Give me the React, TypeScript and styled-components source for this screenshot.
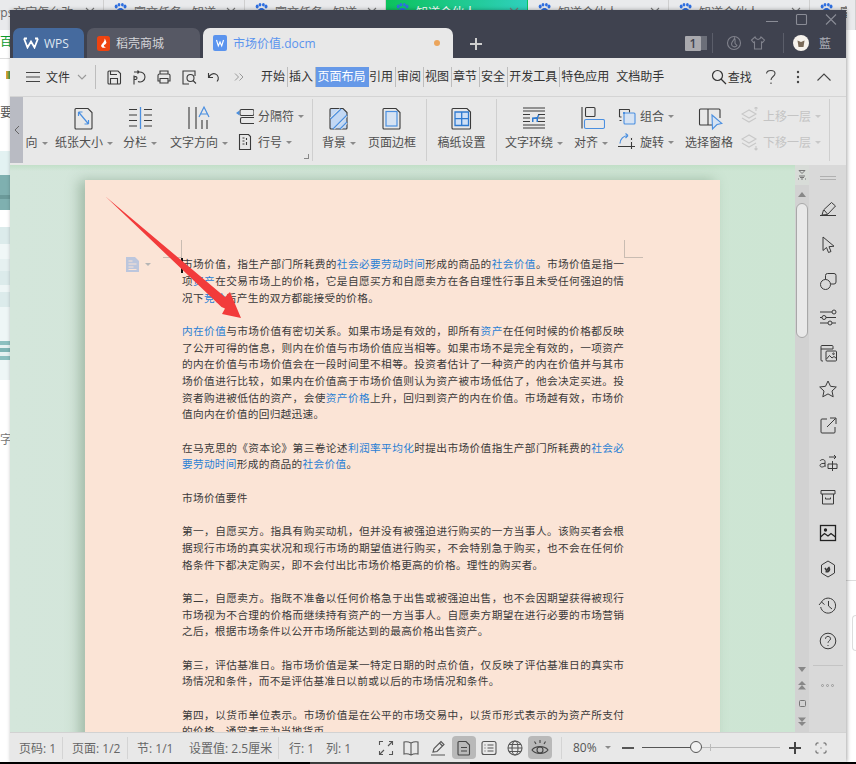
import React from 'react';
import styled, { createGlobalStyle } from 'styled-components';

const Global = createGlobalStyle`
  html, body { margin: 0; padding: 0; background: #fff; }
  body { font-family: "Open Sans", "Noto Sans CJK SC", sans-serif; }
  #root { width: 856px; height: 764px; overflow: hidden; }
`;

const Desktop = styled.div`position: relative; width: 856px; height: 764px; overflow: hidden; background: #fff;`;

/* ---- what lies behind the window ---- */
const BrowserStrip = styled.div`display: flex; height: 30px; background: #e9eaec; color: #666; font-size: 12px;`;
const BrowserTab = styled.div<{ $w: number; $green?: boolean; $first?: boolean }>`
  width: ${p => p.$w}px; flex: none; display: flex; align-items: flex-start; gap: 6px; padding: 3px 8px 0 ${p => (p.$first ? 0 : 9)}px;
  box-sizing: border-box; white-space: nowrap; overflow: hidden;
  border-right: 1px solid ${p => (p.$green ? 'transparent' : '#cfcfcf')};
  background: ${p => (p.$green ? 'linear-gradient(90deg,#0cc25c,#2fd0bd)' : 'transparent')};
  color: ${p => (p.$green ? '#fff' : '#666')};
  & > span { flex: 1; overflow: hidden; margin-left: ${p => (p.$first ? -9 : 0)}px; }
`;
const LeftStrip = styled.div`position: absolute; left: 0; top: 30px; width: 10px; display: flex; flex-direction: column; overflow: hidden;`;
const Band = styled.div<{ $h: number; $bg?: string; $fg?: string }>`
  height: ${p => p.$h}px; background: ${p => p.$bg || '#fff'}; color: ${p => p.$fg || '#555'};
  font-size: 12px; line-height: ${p => p.$h}px; white-space: nowrap;
`;
const RightStrip = styled.div`position: absolute; left: 846px; top: 30px; width: 10px; height: 734px; display: flex; flex-direction: column;`;
const RightLine = styled.div`height: 1px; margin-top: 550px; background: #ddd;`;
const RightBox = styled.div`height: 34px; margin-top: 34px; margin-left: 6px; border: 1px solid #ddd; border-right: 0; border-radius: 4px 0 0 4px;`;
const BottomStrip = styled.div`position: absolute; left: 0; top: 762px; width: 856px; height: 2px; background: linear-gradient(90deg,#000 0,#000 310px,#444 310px,#444 470px,#000 470px);`;

/* ---- window ---- */
const Window = styled.div`
  position: absolute; left: 10px; top: 10px; width: 836px; height: 752px;
  display: flex; flex-direction: column; background: #e8e8e8; box-shadow: 1px 0 4px rgba(0,0,0,.35);
`;
const TitleBar = styled.div`height: 48px; flex: none; display: flex; align-items: flex-end; background: #3f424f; padding-left: 3px; position: relative;`;
const DocTab = styled.div<{ $w: number; $bg: string; $fg: string }>`
  width: ${p => p.$w}px; height: 30px; flex: none; margin-right: 3px; box-sizing: border-box; padding-left: 10px;
  display: flex; align-items: center; gap: 5px; border-radius: 7px 7px 0 0; font-size: 12px;
  background: ${p => p.$bg}; color: ${p => p.$fg};
`;
const TabDot = styled.i`width: 6px; height: 6px; border-radius: 50%; background: #eba55c; margin-left: auto; margin-right: 13px;`;
const TitleRight = styled.div`margin-left: auto; height: 48px; width: 161px; display: flex; flex-direction: column; flex: none;`;
const WinControls = styled.div`height: 18px; display: flex; justify-content: flex-end; gap: 14px; padding-right: 7px;`;
const TitleTools = styled.div`display: flex; align-items: center; margin-top: 4px; height: 22px;`;
const Badge = styled.div`width: 16px; height: 15px; background: #a9a9ae; color: #3f424f; font-size: 12px; font-weight: 600; line-height: 15px; text-align: center; border-radius: 1px;`;
const TitleSep = styled.i<{ $ml: number }>`width: 1px; height: 20px; background: #5b5e6a; margin-left: ${p => p.$ml}px;`;
const TitleIcon = styled.div<{ $ml: number }>`margin-left: ${p => p.$ml}px;`;
const Avatar = styled.div`width: 16px; height: 16px; border-radius: 50%; background: #f6f2ec; margin-left: 9px; display: flex; align-items: center; justify-content: center;`;
const UserName = styled.span`font-size: 12px; color: #a9abb3; margin-left: 10px;`;
const AddTab = styled.div`align-self: center; margin-top: 19px; margin-left: 13px;`;

const MenuBar = styled.div`height: 38px; flex: none; display: flex; align-items: center; background: #e8e8e8; border-bottom: 1px solid #d4d4d4; padding-left: 15px; color: #333; font-size: 12px;`;
const FileText = styled.span`margin-left: 5px; width: 24px; flex: none; white-space: nowrap;`;
const FileChevron = styled.div`margin-left: 7px;`;
const MenuSep = styled.i`width: 1px; height: 24px; background: #bdbdbd; margin: 0 5px 0 8px; flex: none;`;
const QuickIcon = styled.div`width: 25px; display: flex; justify-content: center; flex: none;`;
const MenuTabs = styled.div`display: flex; align-items: center; margin-left: 8.5px;`;
const MenuTab = styled.div<{ $on?: boolean; $noLine?: boolean; $ml?: number }>`
  height: 20px; line-height: 20px; padding: 0 ${p => (p.$on ? 2 : 1.5)}px; white-space: nowrap; flex: none;
  border-right: 1px solid ${p => (p.$on || p.$noLine ? 'transparent' : '#bdbdbd')};
  background: ${p => (p.$on ? '#6699e8' : 'transparent')}; color: ${p => (p.$on ? '#fff' : '#333')};
  margin-right: ${p => (p.$on ? -1 : 0)}px; margin-left: ${p => p.$ml || 0}px; box-sizing: content-box;
`;
const MenuRight = styled.div`display: flex; align-items: center; margin-left: 44px;`;
const SearchText = styled.span`margin-left: 1px; width: 24px; font-size: 12px; white-space: nowrap;`;
const MenuGlyph = styled.div<{ $w: number }>`width: ${p => p.$w}px; display: flex; justify-content: center; flex: none;`;

const Ribbon = styled.div`height: 68px; flex: none; display: flex; background: #e8e8e8; color: #505050; font-size: 12px; overflow: hidden;`;
const RibbonGutter = styled.div`width: 13px; flex: none; height: 66px; background: #b9bbc3; display: flex; align-items: center; justify-content: center;`;
const Big = styled.div<{ $w: number }>`width: ${p => p.$w}px; flex: none; display: flex; flex-direction: column; align-items: center; padding-top: 7px; box-sizing: border-box;`;
const BigIcon = styled.div`height: 28px; width: 28px;`;
const BigLabel = styled.div`margin-top: 2px; height: 18px; line-height: 18px; white-space: nowrap; display: flex; align-items: center; gap: 4px;`;
const Caret = styled.i<{ $off?: boolean }>`display: block; width: 0; height: 0; border: 3px solid transparent; border-bottom: 0; border-top: 3px solid ${p => (p.$off ? '#c8c8c8' : '#8a8a8a')}; flex: none;`;
const SmallCol = styled.div<{ $w: number; $pl: number }>`
  width: ${p => p.$w}px; flex: none; box-sizing: border-box; padding-left: ${p => p.$pl}px; padding-top: 10px;
  display: flex; flex-direction: column; gap: 8px; position: relative;
`;
const SmallRow = styled.div<{ $off?: boolean }>`height: 18px; display: flex; align-items: center; gap: 4px; white-space: nowrap; color: ${p => (p.$off ? '#c4c4c4' : '#505050')};`;
const Launcher = styled.i`position: absolute; right: 3px; bottom: 6px; width: 4px; height: 4px; border-right: 1px solid #888; border-bottom: 1px solid #888;`;
const RibbonSep = styled.i<{ $ml?: number }>`width: 1px; height: 62px; margin-top: 2px; flex: none; background: #cfcfcf; margin-left: ${p => p.$ml || 0}px;`;

const Body = styled.div`flex: 1; min-height: 0; display: flex; overflow: hidden;`;
const DocArea = styled.div`
  flex: 1; min-width: 0; padding: 15px 0 0 75px; overflow: hidden;
  background: linear-gradient(180deg,rgba(190,222,196,.8) 0,rgba(190,222,196,0) 6px), linear-gradient(90deg,#d4e6db 0,#cde5d3 100%);
`;
const Paper = styled.div`
  position: relative; width: 635px; height: 700px; box-sizing: border-box; padding: 76.2px 96px 0 97px;
  background: #fbe4d6; box-shadow: -6px 0 12px rgba(90,125,95,.4); color: #3a3a3a;
  font-family: "Noto Sans CJK SC", sans-serif; font-size: 10.67px; line-height: 16.68px;
`;
const Para = styled.div`margin-bottom: 16.68px;`;
const Line = styled.div<{ $last?: boolean }>`
  white-space: nowrap; text-align: justify; text-justify: inter-character;
  text-align-last: ${p => (p.$last ? 'left' : 'justify')}; letter-spacing: ${p => (p.$last ? '.3px' : '0')};
`;
const Lk = styled.span`color: #2a7fd4;`;
const CropMark = styled.i<{ $l: number; $t: number; $w: number; $h: number }>`
  position: absolute; left: ${p => p.$l}px; top: ${p => p.$t}px; width: ${p => p.$w}px; height: ${p => p.$h}px; background: #c9bcb2;
`;
const Cursor = styled.i`position: absolute; left: 96px; top: 78px; width: 2px; height: 15px; background: #111;`;
const Arrow = styled.svg`position: absolute; left: 0; top: 0;`;
const ParaMark = styled.svg`position: absolute; left: 41px; top: 77px;`;
const ParaCaret = styled.i`position: absolute; left: 60px; top: 83px; width: 0; height: 0; border: 3px solid transparent; border-bottom: 0; border-top: 3px solid #b5b5b5;`;

const ScrollBar = styled.div`width: 14px; flex: none; background: #d2d2d2; display: flex; flex-direction: column; align-items: center;`;
const SplitBtn = styled.div`height: 20px; width: 100%; display: flex; align-items: center; justify-content: center; background: #d8dcd8;`;
const ScrollBtn = styled.div<{ $h?: number }>`height: ${p => p.$h || 18}px; flex: none; display: flex; align-items: center; justify-content: center;`;
const Thumb = styled.div`width: 12px; height: 135px; margin-top: 0; box-sizing: border-box; flex: none; background: #e9e9e9; border: 1px solid #a8a8a8; border-radius: 6px;`;
const ScrollEnd = styled.div`margin-top: auto; display: flex; flex-direction: column; align-items: center; padding-bottom: 3px;`;

const SideBar = styled.div`width: 37px; flex: none; background: #d9d9d9; display: flex; flex-direction: column; align-items: center;`;
const SideHandle = styled.div`height: 26px; display: flex; align-items: center; flex: none;`;
const SideBtn = styled.div`height: 36px; flex: none; display: flex; align-items: center; justify-content: center;`;
const SideDivider = styled.i`width: 30px; height: 1px; background: #c4c4c4; margin-top: 6px; flex: none;`;
const SideMore = styled.div`margin-top: 18px; display: flex; gap: 2px;`;
const MoreDot = styled.i`width: 3px; height: 3px; box-sizing: border-box; border: 1px solid #999; border-radius: 50%;`;

const StatusBar = styled.div`height: 30px; flex: none; display: flex; align-items: center; background: #e8e8e8; border-top: 1px solid #d2d2d2; box-sizing: border-box; color: #666; font-size: 12px;`;
const StatusLeft = styled.div`width: 364px; flex: none; display: flex; align-items: center; padding-left: 9px; box-sizing: border-box; white-space: nowrap;`;
const StatusItem = styled.span<{ $w: number }>`width: ${p => p.$w}px; flex: none;`;
const StatusSep = styled.i<{ $mr?: number; $ml?: number }>`width: 1px; height: 22px; background: #d4d4d4; flex: none; margin-right: ${p => p.$mr || 0}px; margin-left: ${p => p.$ml || 0}px;`;
const StatusIcon = styled.div<{ $w: number; $on?: boolean; $ml?: number }>`
  width: ${p => p.$w}px; height: 23px; flex: none; display: flex; align-items: center; justify-content: center;
  border-radius: 4px; margin-left: ${p => p.$ml || 0}px; background: ${p => (p.$on ? '#b9b9b9' : 'transparent')};
`;
const Zoom = styled.span`margin-left: 11px; width: 27px; flex: none; color: #555;`;
const ZoomCaret = styled.div`margin-left: 5px;`;
const ZoomMinus = styled.div`margin-left: 10px;`;
const FitBtn = styled.div`margin-left: 13px;`;
const Slider = styled.div`position: relative; width: 138px; height: 1px; background: #b8b8b8; margin: 0 8px 0 7px; flex: none;`;
const SliderFill = styled.div`height: 1px; background: #555;`;
const SliderTick = styled.i`position: absolute; left: 68px; top: -3px; width: 1px; height: 7px; background: #bbb;`;
const SliderKnob = styled.i`position: absolute; left: 48px; top: -6px; width: 12px; height: 12px; box-sizing: border-box; border-radius: 50%; background: #f2f2f2; border: 1px solid #555;`;

const S = '#3a3a3a';
const B = '#4a8fe0';
const IconSvg = styled.svg`display: block; flex: none;`;
const Svg = ({ w = 28, h = 28, c = S, sw = 1.1, children }: { w?: number; h?: number; c?: string; sw?: number; children: React.ReactNode }) => (
  <IconSvg width={w} height={h} viewBox={`0 0 ${w} ${h}`} fill="none" stroke={c} strokeWidth={sw}>{children}</IconSvg>
);

const Paw = () => (
  <IconSvg width="15" height="14" viewBox="0 0 15 14" fill="#2f6fe0">
    <ellipse cx="3.2" cy="3.5" rx="1.5" ry="2" /><ellipse cx="6" cy="1.8" rx="1.4" ry="1.8" /><ellipse cx="9.4" cy="1.8" rx="1.4" ry="1.8" /><ellipse cx="12" cy="3.5" rx="1.5" ry="2" />
    <path d="M7.5 5C5 5 3 7.5 3.5 10c.4 1.6 2.5.8 4 .8s3.6.8 4-.8c.5-2.5-1.5-5-4-5z" />
  </IconSvg>
);
const Chevron = ({ c = '#777' }: { c?: string }) => <Svg w={10} h={14} c={c}><path d="M1 5l4 4 4-4" /></Svg>;

const tabsBehind: [number, string, boolean][] = [
  [104, 'wps文字怎么改', false], [141, '富文任务 - 知道', true], [141, '富文任务 - 知道', true],
  [142, '知道合伙人', true], [141, '知道合伙人', true], [141, '知道合伙人', true], [46, '富文', true],
];

const rawDoc: string[][] = [
  ['市场价值，指生产部门所耗费的[社会必要劳动时间]形成的商品的[社会价值]。市场价值是指一', '项[资产]在交易市场上的价格，它是自愿买方和自愿卖方在各自理性行事且未受任何强迫的情', '况下[竞价]后产生的双方都能接受的价格。'],
  ['[内在价值]与市场价值有密切关系。如果市场是有效的，即所有[资产]在任何时候的价格都反映', '了公开可得的信息，则内在价值与市场价值应当相等。如果市场不是完全有效的，一项资产', '的内在价值与市场价值会在一段时间里不相等。投资者估计了一种资产的内在价值并与其市', '场价值进行比较，如果内在价值高于市场价值则认为资产被市场低估了，他会决定买进。投', '资者购进被低估的资产，会使[资产价格]上升，回归到资产的内在价值。市场越有效，市场价', '值向内在价值的回归越迅速。'],
  ['在马克思的《资本论》第三卷论述[利润率平均化]时提出市场价值指生产部门所耗费的[社会必', '要劳动时间]形成的商品的[社会价值]。'],
  ['市场价值要件'],
  ['第一，自愿买方。指具有购买动机，但并没有被强迫进行购买的一方当事人。该购买者会根', '据现行市场的真实状况和现行市场的期望值进行购买，不会特别急于购买，也不会在任何价', '格条件下都决定购买，即不会付出比市场价格更高的价格。理性的购买者。'],
  ['第二，自愿卖方。指既不准备以任何价格急于出售或被强迫出售，也不会因期望获得被现行', '市场视为不合理的价格而继续持有资产的一方当事人。自愿卖方期望在进行必要的市场营销', '之后，根据市场条件以公开市场所能达到的最高价格出售资产。'],
  ['第三，评估基准日。指市场价值是某一特定日期的时点价值，仅反映了评估基准日的真实市', '场情况和条件，而不是评估基准日以前或以后的市场情况和条件。'],
  ['第四，以货币单位表示。市场价值是在公平的市场交易中，以货币形式表示的为资产所支付', '的价格，通常表示为当地货币。'],
];

const renderLine = (text: string) => {
  const parts = text.split(/(\[[^\]]*\]?|[^\[]*\])/).filter(Boolean);
  return parts.map((p, i) => {
    if (p.startsWith('[') || p.endsWith(']')) return <Lk key={i}>{p.replace(/[\[\]]/g, '')}</Lk>;
    return <React.Fragment key={i}>{p}</React.Fragment>;
  });
};

const sideIcons: React.ReactNode[] = [
  <Svg w={24} h={24} sw={1}><path d="M4 18.500h16M6 18l1.500-5L15.500 5.500l4 3.500-8 8.500-5.500.500zM8 13l3.500 4" /></Svg>,
  <Svg w={24} h={24} sw={1}><path d="M7 4v13.500l3.500-3 2 5 2.500-1-2-4.800 5-.500z" /></Svg>,
  <Svg w={24} h={24} sw={1}><path d="M9.500 10.500V6.500a2 2 0 0 1 2-2H18a2 2 0 0 1 2 2V13a2 2 0 0 1-2 2h-3.500" /><circle cx="9.500" cy="15.500" r="5" /></Svg>,
  <Svg w={24} h={24} sw={1}><path d="M4 7h12M4 12.500h2M10 12.500h10M4 18h8M16 18h4" /><circle cx="18" cy="7" r="2" /><circle cx="8" cy="12.500" r="2" /><circle cx="14" cy="18" r="2" /></Svg>,
  <Svg w={24} h={24} sw={1}><path d="M17 8V5.500a1 1 0 0 0-1-1H6a1 1 0 0 0-1 1V19a1 1 0 0 0 1 1h1M5 8h12" /><rect x="10" y="10" width="10.500" height="10" rx="1" /><path d="M10.500 18l3-3.500 2.500 2.500 2-1.500 2.500 2" /><circle cx="17.500" cy="12.800" r=".8" /></Svg>,
  <Svg w={24} h={24} sw={1}><path d="M12 4l2.500 5.300 5.800.7-4.300 4 1.200 5.800-5.200-2.900-5.200 2.900 1.200-5.800-4.300-4 5.800-.7z" /></Svg>,
  <Svg w={24} h={24} sw={1}><path d="M11 6H6a1 1 0 0 0-1 1v12a1 1 0 0 0 1 1h12a1 1 0 0 0 1-1v-5M19.500 5.500L11 14M14 5h6v6" /></Svg>,
  <Svg w={24} h={24} sw={1}><path d="M4 12c1-2 5-2 5 .500V18M9 14.500c-3-.500-5 .500-5 2 0 2 3.500 2 5 0M12 15h9v4.500h-9zM16.500 12v10M13 8h7l-2-2M20 8l-2 2" /></Svg>,
  <Svg w={24} h={24} sw={1}><path d="M5 5.500h14v3.500H5zM6.500 9v10h11V9M9.500 12.500v1.500h5v-1.500" /></Svg>,
  <Svg w={24} h={24} sw={1.300} c="#222"><rect x="4.500" y="4.500" width="15" height="15" /><path d="M4.500 16l4-3.500 3.500 2.500 3-2.500 4.500 3.500" /><circle cx="9.500" cy="9" r="1" fill="#222" /></Svg>,
  <Svg w={24} h={24} sw={1}><path d="M12 4l6.500 4v8L12 20l-6.500-4V8z" /><path d="M9.500 14.500c2 .500 3.500 0 4-2 0-1-.500-2-.500-2-1 .500-1.500 2-1.500 3M9 11l2 3" strokeWidth="1.600" /></Svg>,
  <Svg w={24} h={24} sw={1}><path d="M5.500 9a7.500 7.500 0 1 1-.800 5M3 12l2.500-3 3 2.500M12.500 8v5l3.500 3" /></Svg>,
  <Svg w={24} h={24} sw={1}><circle cx="12" cy="12" r="7.800" /><path d="M9.500 9.800c0-3.200 5-3.200 5 0 0 2-2.500 2-2.500 4M12 16v1" /></Svg>,
];

export default function App() {
  return (
    <Desktop>
      <Global />
      <BrowserStrip>
        {tabsBehind.map(([w, t, paw], i) => (
          <BrowserTab key={i} $w={w} $green={i === 3} $first={i === 0}>
            {paw && <Paw />}
            <span>{t}</span>
            {w > 60 && <Chevron />}
          </BrowserTab>
        ))}
      </BrowserStrip>
      <LeftStrip>
        <Band $h={6} />
        <Band $h={12} $fg="#0a9b2a">百</Band>
        <Band $h={10} />
        <Band $h={1} $bg="#ddd" />
        <Band $h={12} />
        <Band $h={8} $bg="linear-gradient(90deg,#fff 65%,#e0a030 65%,#3a9b50)" />
        <Band $h={27} />
        <Band $h={13} $fg="#555">要</Band>
        <Band $h={32} />
        <Band $h={24} $bg="#e3f2f2" />
        <Band $h={20} $bg="#7fb0b0" />
        <Band $h={4} $bg="#6b9a9a" />
        <Band $h={11} $bg="#7fb0b0" />
        <Band $h={17} />
        <Band $h={17} $bg="#dcebeb" />
        <Band $h={15} $bg="#f0f7f7" />
        <Band $h={12} $bg="#e6f1f1" />
        <Band $h={14} $bg="#dcebeb" />
        <Band $h={7} $bg="#eef6f6" />
        <Band $h={15} $bg="#dcebeb" />
        <Band $h={34} $bg="#eef6f6" />
        <Band $h={4} $bg="#8cc0c0" />
        <Band $h={3} $bg="#e6f2f2" />
        <Band $h={4} $bg="#7fb5b5" />
        <Band $h={4} $bg="#e6f2f2" />
        <Band $h={4} $bg="#8cc0c0" />
        <Band $h={20} $bg="#eef6f6" />
        <Band $h={53} />
        <Band $h={14} $fg="#777">字</Band>
      </LeftStrip>
      <RightStrip><RightLine /><RightBox /></RightStrip>
      <BottomStrip />

      <Window>
        <TitleBar>
          <DocTab $w={71} $bg="#456a9e" $fg="#dfe6f0">
            <Svg w={16} h={12} c="#fff" sw={1.800}><path d="M1 1.500l3.500 9L8 4.500l3.500 6L15 1.500M1 1.500h3M12 1.500h3" /></Svg>
            <span>WPS</span>
          </DocTab>
          <DocTab $w={113} $bg="#565864" $fg="#d4d5d9">
            <IconSvg width="14" height="15" viewBox="0 0 14 15"><rect width="13" height="15" rx="2.500" fill="#ee4310" /><path d="M7.500 2.500C8 6 5 7 4 10c1 2 3 2.500 5 1-1.500 0-2.500-.500-2-2 1 0 2-1 2.500-2.500C9 5 8.500 3.500 7.500 2.500z" fill="#fff" /></IconSvg>
            <span>稻壳商城</span>
          </DocTab>
          <DocTab $w={250} $bg="#e8e8e8" $fg="#5b94ee">
            <IconSvg width="15" height="16" viewBox="0 0 15 16"><rect width="14" height="16" rx="2" fill="#5b94ee" /><path d="M3.500 5l1.800 6L7 7l1.700 4 1.800-6" fill="none" stroke="#fff" strokeWidth="1.100" /></IconSvg>
            <span>市场价值.docm</span>
            <TabDot />
          </DocTab>
          <AddTab>
            <Svg w={14} h={14} c="#cfcfcf" sw={2}><path d="M7 1v12M1 7h12" /></Svg>
          </AddTab>
          <TitleRight>
            <WinControls>
              <Svg w={16} h={18} c="#8a8c96" sw={1}><path d="M3 11.500h12" /></Svg>
              <Svg w={16} h={18} c="#8a8c96" sw={1.100}><rect x="3.500" y="4.500" width="10" height="10" rx="1" /></Svg>
              <Svg w={16} h={18} c="#8a8c96" sw={1.100}><path d="M3 4.500l10 10M13 4.500l-10 10" /></Svg>
            </WinControls>
            <TitleTools>
              <Badge>1</Badge>
              <Svg w={6} h={16} c="#9a9ca4" sw={1}><path d="M1 1v14M3 1v14M5 1v14" /></Svg>
              <TitleSep $ml={5} />
              <TitleIcon $ml={13}>
                <Svg w={16} h={16} c="#80828c" sw={1.100}><circle cx="8" cy="8" r="6.500" /><path d="M8.500 3C8 5.500 5.500 6.500 5.500 9a3 3 0 0 0 5.500 1.500c-.500-1-2-1-2-2.500 0-2 .500-3.500-.500-5z" /></Svg>
              </TitleIcon>
              <TitleIcon $ml={8}>
                <Svg w={16} h={16} c="#80828c" sw={1.100}><path d="M5 2L1.500 5l2 2.500L4.500 7v7h7V7l1 .500 2-2.500L11 2c-.500 1.500-2 2.500-3 2.500S5.500 3.500 5 2z" /></Svg>
              </TitleIcon>
              <TitleSep $ml={17} />
              <Avatar>
                <svg width="10" height="10" viewBox="0 0 10 10"><path d="M1.500 2.500L5 4l3.500-1.500L7.500 9h-5z" fill="#7a6a58" /></svg>
              </Avatar>
              <UserName>藍</UserName>
            </TitleTools>
          </TitleRight>
        </TitleBar>

        <MenuBar>
          <Svg w={16} h={14} c="#444" sw={1.100}><path d="M1 2.500h14M1 7h14M1 11.500h14" /></Svg>
          <FileText>文件</FileText>
          <FileChevron><Chevron c="#999" /></FileChevron>
          <MenuSep />
          <QuickIcon><Svg w={16} h={16} sw={1.100}><path d="M2 3a1 1 0 0 1 1-1h9l2.500 2.500V14a1 1 0 0 1-1 1H3a1 1 0 0 1-1-1zM4.500 2v3.500h6.500M4.500 15v-5.500h7V15" /></Svg></QuickIcon>
          <QuickIcon><Svg w={16} h={16} sw={1.100}><path d="M3 3h5l-1.500-1.500M8 3L6.500 4.500M7 12.500c3 1.500 7-.500 7-4.500 0-3.500-3-5-5.500-5M3 6.500v9M3 8.500c1-1.500 3-1 3 .500s-2 2-3 1" /></Svg></QuickIcon>
          <QuickIcon><Svg w={16} h={16} sw={1.100}><path d="M4 5V2h8v3M4 12H2V6.500A1.500 1.500 0 0 1 3.500 5h9A1.500 1.500 0 0 1 14 6.500V12h-2M4 9.500h8V14H4z" /></Svg></QuickIcon>
          <QuickIcon><Svg w={16} h={16} sw={1.100}><path d="M14 7V2H2v13h6" /><circle cx="9.500" cy="9" r="3.500" /><path d="M12 11.500l3 3" /></Svg></QuickIcon>
          <QuickIcon><Svg w={16} h={16} sw={1.100}><path d="M2.500 4v4.500H7M2.800 8.300C4 5.500 7 4 9.500 5c3 1.200 3.800 5 1.500 7.500" /></Svg></QuickIcon>
          <QuickIcon><Svg w={10} h={10} c="#999" sw={1}><path d="M1 1.500L4.500 5 1 8.500M5.500 1.500L9 5 5.500 8.500" /></Svg></QuickIcon>
          <MenuTabs>
            <MenuTab>开始</MenuTab>
            <MenuTab>插入</MenuTab>
            <MenuTab $on>页面布局</MenuTab>
            <MenuTab>引用</MenuTab>
            <MenuTab>审阅</MenuTab>
            <MenuTab>视图</MenuTab>
            <MenuTab>章节</MenuTab>
            <MenuTab>安全</MenuTab>
            <MenuTab>开发工具</MenuTab>
            <MenuTab $noLine>特色应用</MenuTab>
            <MenuTab $noLine $ml={3}>文档助手</MenuTab>
          </MenuTabs>
          <MenuRight>
            <Svg w={16} h={16} c="#333" sw={1.200}><circle cx="6.500" cy="6.500" r="5" /><path d="M10 10l5 5" /></Svg>
            <SearchText>查找</SearchText>
            <MenuGlyph $w={38}><Svg w={12} h={16} c="#444" sw={1.100}><path d="M1.500 4.500C2 .5 10 .5 10 4.500c0 3-4 3-4 6.500M6 13.500v1.500" /></Svg></MenuGlyph>
            <MenuGlyph $w={16}><svg width="4" height="14" viewBox="0 0 4 14" fill="#444"><circle cx="2" cy="2" r="1.200" /><circle cx="2" cy="7" r="1.200" /><circle cx="2" cy="12" r="1.200" /></svg></MenuGlyph>
            <MenuGlyph $w={36}><Svg w={16} h={10} c="#444" sw={1.100}><path d="M1.500 8.500L8 2l6.500 6.500" /></Svg></MenuGlyph>
          </MenuRight>
        </MenuBar>

        <Ribbon>
          <RibbonGutter><Svg w={6} h={10} c="#666" sw={1}><path d="M5 1L1 5l4 4" /></Svg></RibbonGutter>
          <Big $w={27}><BigIcon /><BigLabel>向<Caret /></BigLabel></Big>
          <Big $w={68}>
            <BigIcon><Svg><path d="M6 4.500h12l4 4V24a1 1 0 0 1-1 1H6a1 1 0 0 1-1-1V5.500a1 1 0 0 1 1-1z" /><g stroke={B} strokeWidth="1.200"><path d="M8.500 8l10 12M8.500 8v4M8.500 8h4M18.500 20v-4M18.500 20h-4" /></g></Svg></BigIcon>
            <BigLabel>纸张大小<Caret /></BigLabel>
          </Big>
          <Big $w={44}>
            <BigIcon><Svg><path d="M3 5.500h8M3 11h8M3 16.500h8M3 22h8M18 5.500h8M18 11h8M18 16.500h8M18 22h8" /><path d="M14.500 3v22" stroke={B} strokeWidth="1.300" /></Svg></BigIcon>
            <BigLabel>分栏<Caret /></BigLabel>
          </Big>
          <Big $w={74}>
            <BigIcon><Svg><path d="M4 3v22M11 3v22M17 16v9M22 16v9" /><path d="M14 13l5-10 5 10M15.500 10h7" stroke={B} strokeWidth="1.200" /></Svg></BigIcon>
            <BigLabel>文字方向<Caret /></BigLabel>
          </Big>
          <SmallCol $w={76} $pl={0}>
            <SmallRow>
              <Svg w={18} h={18}><rect x="4" y="2.500" width="14" height="6" rx="1.500" /><path d="M18 10.500H6a1.500 1.500 0 0 0-1.500 1.500v3A1.500 1.500 0 0 0 6 16.500h12" /><path d="M0 6l3.500 2.500V3.500z" fill={B} stroke="none" /></Svg>
              <span>分隔符</span><Caret />
            </SmallRow>
            <SmallRow>
              <Svg w={18} h={18}><path d="M3.500 1.500h9l2 2v13h-11zM6.500 5h2M6.500 8h2M6.500 11h2M10.500 5v2M10.500 9v3" /></Svg>
              <span>行号</span><Caret />
            </SmallRow>
            <Launcher />
          </SmallCol>
          <RibbonSep />
          <Big $w={52}>
            <BigIcon><Svg><path d="M6 4.500h12l4 4V24a1 1 0 0 1-1 1H6a1 1 0 0 1-1-1V5.500a1 1 0 0 1 1-1z" fill="#c3d8f3" /><path d="M5.500 14L15 4.800M9 25l13-13M16 25l6-6" stroke="#e8e8e8" strokeWidth="1.500" /><path d="M5.500 15L16 5M8 25L22 11M15 25l7-7" stroke={B} /></Svg></BigIcon>
            <BigLabel>背景<Caret /></BigLabel>
          </Big>
          <Big $w={54}>
            <BigIcon><Svg><path d="M6 4.500h12l4 4V24a1 1 0 0 1-1 1H6a1 1 0 0 1-1-1V5.500a1 1 0 0 1 1-1z" /><rect x="8" y="7.500" width="11" height="14.500" fill="#d6e3f3" stroke={B} strokeWidth="1.200" /></Svg></BigIcon>
            <BigLabel>页面边框</BigLabel>
          </Big>
          <RibbonSep $ml={7} />
          <Big $w={69}>
            <BigIcon><Svg><path d="M5 4.500h14l3.500 3.500V24a1 1 0 0 1-1 1H5a1 1 0 0 1-1-1V5.500a1 1 0 0 1 1-1z" /><path d="M7 8h13.500v13.500H7zM7 14.700h13.500M13.700 8v13.500" fill="#cfe0f6" stroke="#2f7ad0" strokeWidth="1.300" /></Svg></BigIcon>
            <BigLabel>稿纸设置</BigLabel>
          </Big>
          <RibbonSep />
          <Big $w={74}>
            <BigIcon><Svg><path d="M3 4h22M3 7h22M3 10.500h7M18 10.500h7M3 14h7M18 14h7M3 17.500h7M18 17.500h7M3 21h22M3 24h22" /><path d="M12 18v-4.500l5-.500 1-2.500 1.500 1-1.500 2V18h-1.500v-3H13.500v3z" fill="#2f7ad0" stroke="none" /></Svg></BigIcon>
            <BigLabel>文字环绕<Caret /></BigLabel>
          </Big>
          <Big $w={40}>
            <BigIcon><Svg><path d="M5 3v21.500" /><rect x="8.500" y="3.500" width="9.500" height="9" rx="1" /><rect x="7.500" y="15.500" width="20" height="9" rx="1.500" stroke={B} strokeWidth="1.100" /></Svg></BigIcon>
            <BigLabel>对齐<Caret /></BigLabel>
          </Big>
          <SmallCol $w={69} $pl={7}>
            <SmallRow>
              <Svg w={18} h={18}><path d="M1.500 10V2.500h10" /><path d="M1.500 13.500h2M3.500 10H1.500" strokeDasharray="2 2" /><path d="M11.500 2.500v3" /><rect x="6" y="6" width="11" height="11" rx="1" stroke={B} fill="#d6e3f3" /><rect x="5" y="5" width="2" height="2" fill={B} stroke="none" /></Svg>
              <span>组合</span><Caret />
            </SmallRow>
            <SmallRow>
              <Svg w={18} h={18}><path d="M2 10.500a8 8 0 0 1 8-8M10 2.500L7.500 .5M10 2.500L7.500 5" stroke={B} strokeWidth="1.200" /><path d="M0 13.500h17M13.500 4v12" /><path d="M13.500 3v8" stroke="#e8e8e8" strokeWidth="1.200" strokeDasharray="2 2" /></Svg>
              <span>旋转</span><Caret />
            </SmallRow>
          </SmallCol>
          <Big $w={58}>
            <BigIcon><Svg><path d="M17 21H5.500a1 1 0 0 1-1-1V6a1 1 0 0 1 1-1H24a1 1 0 0 1 1 1v8M13 5v16" /><path d="M17 11l10 8.500-5 1-4.500 4.500z" fill="#d6e3f3" stroke={B} /></Svg></BigIcon>
            <BigLabel>选择窗格</BigLabel>
          </Big>
          <SmallCol $w={91} $pl={3}>
            <SmallRow $off>
              <Svg w={18} h={18} c="#c8c8c8"><path d="M8 3L1 7l7 4 7-4zM1 11l7 4 7-4M15 4V0M13.500 1.500L15 0l1.500 1.500" /></Svg>
              <span>上移一层</span><Caret $off />
            </SmallRow>
            <SmallRow $off>
              <Svg w={18} h={18} c="#c8c8c8"><path d="M8 2L1 6l7 4 7-4zM1 10l7 4 7-4M15 13v4M13.500 15.500L15 17l1.500-1.500" /></Svg>
              <span>下移一层</span><Caret $off />
            </SmallRow>
          </SmallCol>
          <RibbonSep />
        </Ribbon>

        <Body>
          <DocArea>
            <Paper>
              <CropMark $l={96} $t={60} $w={1} $h={18} />
              <CropMark $l={78} $t={77} $w={18} $h={1} />
              <CropMark $l={539} $t={60} $w={1} $h={18} />
              <CropMark $l={539} $t={77} $w={19} $h={1} />
              <ParaMark width="14" height="15" viewBox="0 0 14 15"><path d="M0 0h9l4 4v11H0z" fill="#bcc6dd" /><path d="M2.500 4h4M2.500 7h8M2.500 10h5M2.500 12.500h8" stroke="#fbe4d6" strokeWidth="1" /></ParaMark>
              <ParaCaret />
              <Cursor />
              {rawDoc.map((p, i) => (
                <Para key={i}>
                  {p.map((l, j) => <Line key={j} $last={j === p.length - 1}>{renderLine(l)}</Line>)}
                </Para>
              ))}
              <Arrow width="200" height="160" viewBox="85 180 200 160">
                <path d="M105.500 196.500L225 297l5-5 11 26-19-4 3-5.500-3.500-1.500z" fill="#f23b3b" />
              </Arrow>
            </Paper>
          </DocArea>
          <ScrollBar>
            <SplitBtn><Svg w={10} h={12} c="#777" sw={1}><path d="M2 1.500h6L5 4.500zM2 7h6M1 10h1M4 10h2M8 10h1M3 8.500h4" /></Svg></SplitBtn>
            <ScrollBtn><svg width="8" height="5" viewBox="0 0 8 5" fill="#888"><path d="M4 0l4 5H0z" /></svg></ScrollBtn>
            <Thumb />
            <ScrollEnd>
              <ScrollBtn $h={16}><svg width="8" height="5" viewBox="0 0 8 5" fill="#888"><path d="M4 5l4-5H0z" /></svg></ScrollBtn>
              <ScrollBtn $h={16}><svg width="8" height="9" viewBox="0 0 8 9" fill="#888"><path d="M4 0l4 4H0zM4 4l4 4.500H0z" /></svg></ScrollBtn>
              <ScrollBtn $h={20}><svg width="7" height="7" viewBox="0 0 7 7" fill="none" stroke="#777"><rect x=".5" y=".5" width="6" height="6" rx="1" /></svg></ScrollBtn>
              <ScrollBtn $h={16}><svg width="8" height="9" viewBox="0 0 8 9" fill="#888"><path d="M4 9l4-4H0zM4 5l4-4.500H0z" /></svg></ScrollBtn>
            </ScrollEnd>
          </ScrollBar>
          <SideBar>
            <SideHandle><Svg w={16} h={5} c="#b0b0b0" sw={1}><path d="M0 .5h16M0 3.500h16" /></Svg></SideHandle>
            {sideIcons.map((ic, i) => <SideBtn key={i}>{ic}</SideBtn>)}
            <SideDivider />
            <SideMore><MoreDot /><MoreDot /><MoreDot /></SideMore>
          </SideBar>
        </Body>

        <StatusBar>
          <StatusLeft>
            <StatusItem $w={43}>页码: 1</StatusItem>
            <StatusSep $mr={9} />
            <StatusItem $w={55}>页面: 1/2</StatusItem>
            <StatusSep $mr={9} />
            <StatusItem $w={52}>节: 1/1</StatusItem>
            <StatusItem $w={89}>设置值: 2.5厘米</StatusItem>
            <StatusSep $mr={10} />
            <StatusItem $w={37}>行: 1</StatusItem>
            <StatusItem $w={30}>列: 1</StatusItem>
          </StatusLeft>
          <StatusIcon $w={24}><Svg w={16} h={16} c="#555" sw={1.100}><path d="M1.500 5V1.500H5M11 1.500h3.500V5M14.500 11v3.500H11M5 14.500H1.500V11M10 6l4-4M6 10l-4 4" /></Svg></StatusIcon>
          <StatusIcon $w={26}><Svg w={16} h={16} c="#555" sw={1.100}><path d="M8 3C6 2 3.500 1.500 1 2v12c2.500-.500 5 0 7 1 2-1 4.500-1.500 7-1V2c-2.500-.500-5 0-7 1zM8 3v12" /></Svg></StatusIcon>
          <StatusIcon $w={27}><Svg w={16} h={16} c="#555" sw={1.100}><path d="M1 15h14M3 12l1-3.500L11 1.500l3 3-7 7zM9.500 3l3 3" /></Svg></StatusIcon>
          <StatusIcon $w={24} $on $ml={1}><Svg w={16} h={16} c="#444" sw={1.100}><path d="M3 1.500h7l3.500 3.500v9a1 1 0 0 1-1 1H3a1 1 0 0 1-1-1V2.500a1 1 0 0 1 1-1zM5 7.500h6M5 11h6" /></Svg></StatusIcon>
          <StatusIcon $w={26}><Svg w={16} h={16} c="#555" sw={1.100}><rect x="1" y="1.500" width="14" height="13" rx="2" /><path d="M3.500 5h1M3.500 8h1M3.500 11h1M6.500 5h6M6.500 8h6M6.500 11h6" /></Svg></StatusIcon>
          <StatusIcon $w={26}><Svg w={16} h={16} c="#555" sw={1.100}><circle cx="8" cy="8" r="7" /><ellipse cx="8" cy="8" rx="3" ry="7" /><path d="M1 8h14M2 4.500h12M2 11.500h12" /></Svg></StatusIcon>
          <StatusIcon $w={24} $on><Svg w={18} h={18} c="#444" sw={1.100}><path d="M1 11c3-4.500 13-4.500 16 0-3 4.500-13 4.500-16 0z" /><circle cx="9" cy="11" r="3" /><path d="M9 1v3M3.500 2.500L5 5M14.500 2.500L13 5" /></Svg></StatusIcon>
          <StatusSep $ml={9} />
          <Zoom>80%</Zoom>
          <ZoomCaret><Caret /></ZoomCaret>
          <ZoomMinus><Svg w={14} h={4} c="#555" sw={2}><path d="M1 2h12" /></Svg></ZoomMinus>
          <Slider>
            <SliderFill style={{ width: 49 }} />
            <SliderTick />
            <SliderKnob />
          </Slider>
          <Svg w={14} h={14} c="#444" sw={2}><path d="M7 1v12M1 7h12" /></Svg>
          <FitBtn>
            <Svg w={12} h={12} c="#555" sw={1}><path d="M1 3.500V2a1 1 0 0 1 1-1h1.500M8.500 1H10a1 1 0 0 1 1 1v1.500M11 8.500V10a1 1 0 0 1-1 1H8.500M3.500 11H2a1 1 0 0 1-1-1V8.500" /><path d="M6 5.500v1" /></Svg>
          </FitBtn>
        </StatusBar>
      </Window>
    </Desktop>
  );
}
